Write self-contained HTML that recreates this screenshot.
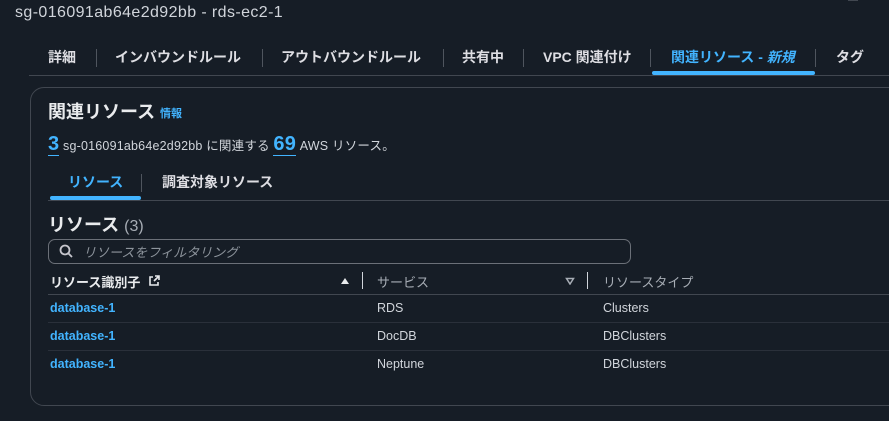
<!DOCTYPE html>
<html><head><meta charset="utf-8"><style>
*{margin:0;padding:0;box-sizing:border-box}
body{width:889px;height:421px;background:#161d26;color:#e9ebed;font-family:"Liberation Sans","Noto Sans CJK JP",sans-serif;position:relative;overflow:hidden}
.a{position:absolute;white-space:nowrap}
.tab{font-size:14px;font-weight:bold;color:#dedee3;top:47px}
.sep{position:absolute;width:1px;background:#4f555e}
.blue{color:#42b4ff}
.hl{position:absolute;height:1px;background:#414750}
.row{font-size:12.5px;color:#d1d5db}
.link{font-size:12.5px;font-weight:bold;color:#42b4ff}
</style></head><body>
<div class="a" style="left:15px;top:4px;font-size:16px;letter-spacing:0.4px;color:#d1d5db">sg-016091ab64e2d92bb - rds-ec2-1</div>
<div style="position:absolute;left:848px;top:0;width:10px;height:1px;background:#414750"></div>

<div class="a tab" style="left:48px">詳細</div>
<div class="sep" style="left:96px;top:49px;height:18px"></div>
<div class="a tab" style="left:115px">インバウンドルール</div>
<div class="sep" style="left:262px;top:49px;height:18px"></div>
<div class="a tab" style="left:281px">アウトバウンドルール</div>
<div class="sep" style="left:443px;top:49px;height:18px"></div>
<div class="a tab" style="left:462px">共有中</div>
<div class="sep" style="left:523px;top:49px;height:18px"></div>
<div class="a tab" style="left:543px">VPC 関連付け</div>
<div class="sep" style="left:650px;top:49px;height:18px"></div>
<div class="a tab blue" style="left:671px;color:#42b4ff">関連リソース - <i>新規</i></div>
<div class="sep" style="left:815px;top:49px;height:18px"></div>
<div class="a tab" style="left:836px">タグ</div>
<div style="position:absolute;left:652px;top:71px;width:163px;height:4px;border-radius:2px;background:#42b4ff"></div>
<div class="hl" style="left:29px;top:75px;width:860px"></div>

<div style="position:absolute;left:30px;top:87px;width:900px;height:319px;border:1px solid #414750;border-radius:14px"></div>
<div class="a" style="left:48px;top:98px;font-size:18px;font-weight:bold;color:#e9ebed">関連リソース</div>
<div class="a blue" style="left:160px;top:105px;font-size:11px;font-weight:bold">情報</div>

<div class="a" style="left:48px;top:133px;font-size:12.5px;letter-spacing:0.2px;color:#d1d5db;line-height:22px">
<span style="font-size:20px;font-weight:bold;color:#42b4ff;border-bottom:1px solid #42b4ff">3</span> sg-016091ab64e2d92bb に関連する <span style="font-size:20px;font-weight:bold;color:#42b4ff;border-bottom:1px solid #42b4ff">69</span> AWS リソース。</div>

<div class="a blue" style="left:68px;top:172px;font-size:14px;font-weight:bold">リソース</div>
<div class="sep" style="left:141px;top:174px;height:18px"></div>
<div class="a" style="left:162px;top:172px;font-size:14px;font-weight:bold;color:#dedee3">調査対象リソース</div>
<div style="position:absolute;left:50px;top:196px;width:91px;height:4px;border-radius:2px;background:#42b4ff"></div>
<div class="hl" style="left:48px;top:200px;width:841px"></div>

<div class="a" style="left:48px;top:211px;font-size:18px;font-weight:bold;color:#e9ebed">リソース <span style="font-weight:normal;color:#a7adb5;font-size:16px">(3)</span></div>

<div style="position:absolute;left:48px;top:239px;width:583px;height:25px;border:1px solid #6b7078;border-radius:7px"></div>
<svg class="a" style="left:59px;top:244px" width="15" height="15" viewBox="0 0 15 15"><circle cx="6" cy="6" r="4.5" fill="none" stroke="#c6c6cd" stroke-width="1.8"/><line x1="9.3" y1="9.3" x2="13" y2="13" stroke="#c6c6cd" stroke-width="1.8"/></svg>
<div class="a" style="left:83px;top:242px;font-size:13px;font-style:italic;color:#8d949c">リソースをフィルタリング</div>

<div class="a" style="left:50px;top:272px;font-size:13px;font-weight:bold;color:#e9ebed">リソース識別子</div>
<svg class="a" style="left:148px;top:275px" width="12" height="12" viewBox="0 0 12 12" fill="none" stroke="#e9ebed" stroke-width="1.6"><path d="M5 2H2v8h8V7"/><path d="M6 6l5-5M7 1h4v4"/></svg>
<svg class="a" style="left:340px;top:277px" width="10" height="8"><path d="M1 7L5 1 9 7z" fill="#e9ebed"/></svg>
<div class="sep" style="left:362px;top:272px;height:17px;background:#d1d5db"></div>
<div class="a" style="left:377px;top:272px;font-size:13px;color:#a7adb5">サービス</div>
<svg class="a" style="left:565px;top:277px" width="10" height="8"><path d="M1.5 1.5h7L5 7z" fill="none" stroke="#a7adb5" stroke-width="1.5"/></svg>
<div class="sep" style="left:587px;top:272px;height:17px;background:#d1d5db"></div>
<div class="a" style="left:603px;top:272px;font-size:13px;color:#a7adb5">リソースタイプ</div>
<div class="hl" style="left:48px;top:294px;width:841px"></div>

<div class="a link" style="left:50px;top:301px">database-1</div>
<div class="a row" style="left:377px;top:301px">RDS</div>
<div class="a row" style="left:603px;top:301px">Clusters</div>
<div class="hl" style="left:48px;top:322px;width:841px;background:#2a303a"></div>
<div class="a link" style="left:50px;top:329px">database-1</div>
<div class="a row" style="left:377px;top:329px">DocDB</div>
<div class="a row" style="left:603px;top:329px">DBClusters</div>
<div class="hl" style="left:48px;top:350px;width:841px;background:#2a303a"></div>
<div class="a link" style="left:50px;top:357px">database-1</div>
<div class="a row" style="left:377px;top:357px">Neptune</div>
<div class="a row" style="left:603px;top:357px">DBClusters</div>
</body></html>
